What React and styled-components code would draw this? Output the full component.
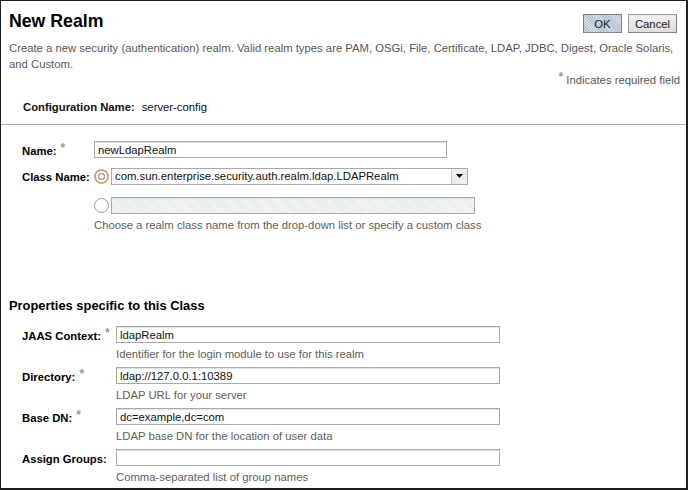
import React from "react";
import styled, { createGlobalStyle } from "styled-components";

const GlobalStyle = createGlobalStyle`
  html, body {
    margin: 0;
    padding: 0;
    background: #ffffff;
  }
  body {
    font-family: "Liberation Sans", Arial, sans-serif;
    font-size: 11.3px;
    color: #000;
  }
`;

const classFields = [
  {
    label: "JAAS Context:",
    value: "ldapRealm",
    help: "Identifier for the login module to use for this realm",
    required: true,
  },
  {
    label: "Directory:",
    value: "ldap://127.0.0.1:10389",
    help: "LDAP URL for your server",
    required: true,
  },
  {
    label: "Base DN:",
    value: "dc=example,dc=com",
    help: "LDAP base DN for the location of user data",
    required: true,
  },
  {
    label: "Assign Groups:",
    value: "",
    help: "Comma-separated list of group names",
    required: false,
  },
];

function App() {
  return (
    <>
      <GlobalStyle />
      <Frame>
        <Header>
          <Title>New Realm</Title>
          <ButtonBar>
            <Button $primary>OK</Button>
            <Button>Cancel</Button>
          </ButtonBar>
        </Header>
        <Description>
          Create a new security (authentication) realm. Valid realm types are
          PAM, OSGi, File, Certificate, LDAP, JDBC, Digest, Oracle Solaris,
          and Custom.
        </Description>
        <RequiredNote>
          <Star>*</Star> Indicates required field
        </RequiredNote>
        <ConfigRow>
          <ConfigLabel>Configuration Name:</ConfigLabel>
          <span>server-config</span>
        </ConfigRow>
        <Divider />

        <TopForm>
          <Label>
            Name:<Star>*</Star>
          </Label>
          <TextBox $width={353}>newLdapRealm</TextBox>

          <Label>Class Name:</Label>
          <ChoiceLine>
            <Radio $checked />
            <SelectBox>
              <SelectText>com.sun.enterprise.security.auth.realm.ldap.LDAPRealm</SelectText>
              <SelectArrow>
                <svg width="7" height="4" viewBox="0 0 7 4">
                  <path d="M0 0h7L3.5 4z" fill="#000" />
                </svg>
              </SelectArrow>
            </SelectBox>
          </ChoiceLine>

          <span />
          <ChoiceBlock>
            <ChoiceLine>
              <Radio />
              <TextBox $width={364} $disabled />
            </ChoiceLine>
            <Help>
              Choose a realm class name from the drop-down list or specify a
              custom class
            </Help>
          </ChoiceBlock>
        </TopForm>

        <SectionTitle>Properties specific to this Class</SectionTitle>
        <PropsForm>
          {classFields.map((f) => (
            <React.Fragment key={f.label}>
              <Label>
                {f.label}
                {f.required && <Star>*</Star>}
              </Label>
              <div>
                <TextBox $width={384}>{f.value}</TextBox>
                <Help>{f.help}</Help>
              </div>
            </React.Fragment>
          ))}
        </PropsForm>
      </Frame>
    </>
  );
}

export default App;

const Frame = styled.div`
  box-sizing: border-box;
  width: 688px;
  height: 490px;
  overflow: hidden;
  background: #fff;
  border: 1px solid #1e1e1e;
  border-right-width: 2px;
  border-bottom-width: 2px;
`;

const Header = styled.div`
  display: flex;
  justify-content: space-between;
  align-items: flex-start;
  padding: 10px 9px 0 8px;
`;

const Title = styled.h1`
  margin: 0;
  font-size: 17.7px;
  line-height: 21px;
  font-weight: bold;
  color: #000;
`;

const ButtonBar = styled.div`
  display: flex;
  gap: 6px;
  margin-top: 3px;
`;

const Button = styled.button`
  box-sizing: border-box;
  height: 19px;
  padding: 0;
  font-family: "Liberation Sans", Arial, sans-serif;
  font-size: 11.3px;
  line-height: 16px;
  color: #222;
  border: 1px solid ${(p) => (p.$primary ? "#7d7d7d" : "#9a9a9a")};
  border-right-color: #8a7f7f;
  border-bottom-color: #8a7f7f;
  background: ${(p) =>
    p.$primary
      ? "repeating-linear-gradient(45deg, #b4c3d1 0 1px, #d5dee7 1px 2px)"
      : "linear-gradient(#f0f0f0, #dedede)"};
  width: ${(p) => (p.$primary ? "39px" : "49px")};
`;

const Description = styled.p`
  margin: 7px 0 0;
  padding: 0 6px 0 8px;
  line-height: 16px;
  color: #585858;
`;

const RequiredNote = styled.div`
  text-align: right;
  padding-right: 6px;
  line-height: 16px;
  color: #585858;
`;

const Star = styled.sup`
  color: #9a9a9a;
  font-size: 12px;
  font-weight: bold;
  vertical-align: top;
  line-height: 10px;
  margin-left: 4px;
`;

const ConfigRow = styled.div`
  display: flex;
  gap: 7px;
  margin-top: 11px;
  padding-left: 22px;
  line-height: 16px;
  color: #111;
`;

const ConfigLabel = styled.span`
  font-weight: bold;
`;

const Divider = styled.hr`
  margin: 9px 0 0;
  border: 0;
  border-top: 1px solid #a8a8a8;
`;

const TopForm = styled.div`
  display: grid;
  grid-template-columns: 72px auto;
  justify-content: start;
  row-gap: 8px;
  padding: 16px 0 0 21px;
`;

const PropsForm = styled.div`
  display: grid;
  grid-template-columns: 94px auto;
  justify-content: start;
  row-gap: 5px;
  padding: 12px 0 0 21px;
`;

const Label = styled.div`
  font-weight: bold;
  line-height: 16px;
  padding-top: 2px;
  color: #000;
  white-space: nowrap;
`;

const TextBox = styled.div`
  box-sizing: border-box;
  width: ${(p) => p.$width}px;
  height: 17px;
  padding: 0 3px;
  line-height: 16px;
  color: #111;
  border: 1px solid #a9a9a9;
  box-shadow: inset 0 1px 0 #d9e6ea;
  background: ${(p) =>
    p.$disabled
      ? "repeating-linear-gradient(45deg, #e7ecec 0 1px, #f3f6f6 1px 2px)"
      : "#fff"};
`;

const ChoiceBlock = styled.div`
  margin-top: 4px;
`;

const ChoiceLine = styled.div`
  display: flex;
  align-items: center;
  gap: 2px;
`;

const Radio = styled.span`
  box-sizing: border-box;
  width: 15px;
  height: 15px;
  border-radius: 50%;
  flex: none;
  border: ${(p) => (p.$checked ? "2px solid #c9a96e" : "1px solid #9a9a9a")};
  background: ${(p) =>
    p.$checked
      ? "radial-gradient(circle, #fff 0 2px, #a0a0a0 2.5px 3.5px, #fff 4px)"
      : "#fff"};
`;

const SelectBox = styled.div`
  box-sizing: border-box;
  display: flex;
  width: 357px;
  height: 17px;
  border: 1px solid #a9a9a9;
  background: #fff;
`;

const SelectText = styled.span`
  flex: 1;
  padding-left: 3px;
  line-height: 15px;
  color: #111;
  white-space: nowrap;
  overflow: hidden;
`;

const SelectArrow = styled.span`
  display: flex;
  align-items: center;
  justify-content: center;
  width: 15px;
  border-left: 1px solid #c8c8c8;
  background: repeating-linear-gradient(45deg, #e2e6e6 0 1px, #f4f6f6 1px 2px);
`;

const Help = styled.div`
  margin-top: 3px;
  line-height: 16px;
  color: #5e5e5e;
  white-space: nowrap;
`;

const SectionTitle = styled.h2`
  margin: 65px 0 0;
  padding-left: 8px;
  font-size: 12.9px;
  line-height: 16px;
  font-weight: bold;
  color: #000;
`;
